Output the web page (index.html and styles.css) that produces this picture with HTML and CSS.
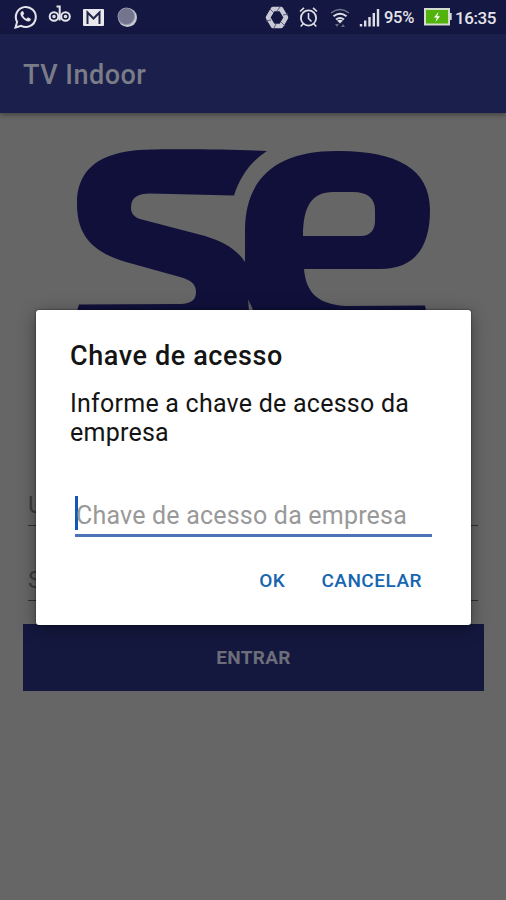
FILE: index.html
```html
<!DOCTYPE html>
<html lang="pt-BR">
<head>
    <meta charset="UTF-8">
    <meta name="viewport" content="width=device-width, initial-scale=1.0">
    <title>TV Indoor</title>
    <link rel="stylesheet" href="styles.css">
</head>
<body>
    <div class="status-bar">
        <svg class="status-left" width="126" height="34" viewBox="12 0 126 34" fill="none" stroke="#e4e4ea" stroke-width="2">
            <!-- whatsapp -->
            <path d="M15.5 27.5l1.6-5.6a10 10 0 1 1 4 3.9z"/>
            <path d="M21.5 11.5c-2 1.5-1 4.500 1.500 7s5.500 4 7.500 2l.5-1.500-3-1.700-1.500 1.400c-1.500-.5-3-2-3.500-3.500l1.200-1.400-1.200-2.700z" fill="#e4e4ea" stroke="none"/>
            <!-- gravador -->
            <circle cx="54" cy="16.500" r="4.300"/>
            <circle cx="65.500" cy="16.500" r="4.300"/>
            <path d="M59.700 5.500v15M56.500 6.500h3.500"/>
            <circle cx="54" cy="16.500" r=".8"/>
            <circle cx="65.500" cy="16.500" r=".8"/>
            <!-- gmail -->
            <rect x="83" y="9" width="21" height="17" rx="1" fill="#e9e9ed" stroke="none"/>
            <path d="M87.500 24V12.500l6 6 6-6V24" stroke="#24264b" stroke-width="2"/>
            <!-- bolha -->
            <circle cx="127.500" cy="17.500" r="9.500" fill="#c5c7d3" stroke="none"/>
            <circle cx="126.300" cy="16.300" r="8.300" fill="#73758f" stroke="#9395aa" stroke-width="1"/>
        </svg>
        <svg class="status-right" width="116" height="34" viewBox="264 0 116 34" fill="none" stroke="#dedee6" stroke-width="2">
            <!-- sincronizar -->
            <path d="M273 9h8l5 8.500-5 8.500h-8l-5-8.500z" stroke="#c7c8d3" stroke-width="4.500" stroke-linejoin="round"/>
            <path d="M270 9l4 4M280 7l-3 4M288 14l-5 1M285 26l-4-4M274 28l2-4M266 21l5-1" stroke="#5b5e7e" stroke-width="1"/>
            <!-- alarme -->
            <circle cx="308.500" cy="18" r="7.600" stroke-width="1.800"/>
            <path d="M308.500 13v5.500l3 3M300 11.500l4-3.700M317 11.500l-4-3.700M303.500 23.500l-2.800 3M313.500 23.500l2.800 3" stroke-width="1.600"/>
            <!-- wifi -->
            <path d="M331 13q9-7 18 0" stroke="#777990" stroke-width="1.500"/>
            <path d="M333.500 16.200q6.500-5 13 0M336 19.500q4-3 8 0"/>
            <path d="M337 20.500q3-1.500 6 0l-3 3z" fill="#dedee6" stroke="none"/>
            <path d="M335 24h4l-2 3zM341 27h4l-2-3z" fill="#666982" stroke="none"/>
            <!-- sinal -->
            <path d="M361 24v2.500M365.200 20.500v6M369.500 17v9.500M373.800 13v13.500M378 9v17.500" stroke-width="2.400"/>
        </svg>
        <span class="percent">95%</span>
        <svg class="battery" width="28" height="18" viewBox="0 0 28 18">
            <rect x="1" y="1" width="24" height="15.500" fill="#52b30c" stroke="#d3dccf" stroke-width="2"/>
            <path d="M26 5h1.700v7H26z" fill="#d3dccf"/>
            <path d="M14.500 4L10 9.500h2.800L11.500 14 16 8.300h-2.800z" fill="#fff"/>
        </svg>
        <span class="clock">16:35</span>
    </div>

    <div class="app-bar">TV Indoor</div>

    <div class="content">
        <svg class="logo" width="354" height="162" viewBox="77 149 354 162" fill="#10103b">
            <path d="M267 151C235 149.500 190 149 155 149.500C113 149.500 77 160 77 204C77 235 92 252 126 262L180 277C192 280 196 285 196 292C196 300 191 303.500 181 304L79 304.500L77 311H249L245 262C236 248 221 241 205 236L140 219C134 217 131 213 131 208C131 197 138 193.500 150 193.500L234 195.500C240 177 250 162 267 151Z"/>
            <path fill-rule="evenodd" d="M340 151C279 150 245 176 245 231V290L252 311H426L425 305.500L345 306C317 304 306 292 304 269H380C415 269 430 247 430 210C430 168 396 151.500 340 151ZM303 236H361C371 236 375 229 375 221V210C375 198 367 192 353 192H333C312 192 303 206 303 236Z"/>
            <path d="M249 301l4.500 10h-2.500z" fill="#63646b"/>
        </svg>

        <div class="field field-user">U</div>
        <div class="field field-password">S</div>
        <div class="enter">ENTRAR</div>
    </div>

    <div class="dialog">
        <h1>Chave de acesso</h1>
        <p>Informe a chave de acesso da empresa</p>
        <div class="key-input">Chave de acesso da empresa</div>
        <div class="actions">
            <span>OK</span>
            <span>CANCELAR</span>
        </div>
    </div>
</body>
</html>
```
FILE: styles.css
```css
* {
    box-sizing: border-box;
}

body {
    margin: 0;
    height: 900px;
    overflow: hidden;
    position: relative;
    background-color: #666;
    font-family: Roboto, sans-serif;
}

.status-bar {
    display: flex;
    align-items: center;
    height: 34px;
    padding-left: 12px;
    background-color: #141741;
    color: #e4e4ea;
    font-size: 17px;
    font-weight: 500;
}

.status-right {
    margin-left: 126px;
}

.percent {
    width: 35px;
    margin-left: 4px;
    font-size: 16.5px;
    letter-spacing: -0.3px;
    line-height: 34px;
    padding-top: 2px;
}

.battery {
    margin-left: 5px;
}

.clock {
    margin-left: 3px;
    padding-top: 2px;
    letter-spacing: -0.4px;
}

.app-bar {
    height: 79px;
    padding-left: 23px;
    background-color: #1a1f4b;
    color: #7a7c88;
    font-size: 27px;
    font-weight: 500;
    letter-spacing: 0.5px;
    line-height: 83px;
    box-shadow: 0 2px 5px rgba(0, 0, 0, 0.35);
}

.content {
    padding: 36px 22px 0 23px;
}

.logo {
    display: block;
    margin-left: 54px;
}

.field {
    height: 40px;
    margin: 0 6px 0 5px;
    border-bottom: 1px solid #303030;
    color: #3c3c3c;
    font-size: 24px;
    line-height: 39px;
}

.field-user {
    margin-top: 175px;
}

.field-password {
    margin-top: 35px;
}

.enter {
    height: 67px;
    margin-top: 23px;
    background-color: #14183f;
    color: #6c6e79;
    font-size: 19px;
    font-weight: 700;
    letter-spacing: 0.3px;
    line-height: 68px;
    text-align: center;
}

.dialog {
    position: absolute;
    top: 310px;
    left: 36px;
    width: 435px;
    height: 315px;
    padding: 30px 24px 0 34px;
    border-radius: 3px;
    background-color: #fff;
    color: #141414;
    box-shadow: 0 4px 18px rgba(0, 0, 0, 0.4), 0 0 2px rgba(0, 0, 0, 0.7);
}

.dialog h1 {
    margin: 0;
    font-size: 27px;
    font-weight: 500;
    letter-spacing: 0.6px;
    line-height: 32px;
}

.dialog p {
    margin: 17px 0 0;
    font-size: 25px;
    letter-spacing: 0.24px;
    line-height: 29px;
}

.key-input {
    height: 40px;
    margin: 50px 15px 0 5px;
    border-bottom: 3px solid #4a74b5;
    color: #999;
    font-size: 25px;
    letter-spacing: 0.2px;
    line-height: 37px;
    white-space: nowrap;
}

/* cursor */
.key-input::before {
    content: "";
    float: left;
    width: 3px;
    height: 34px;
    margin-top: -1px;
    margin-right: -2px;
    background-color: #1259b5;
}

.actions {
    display: flex;
    justify-content: flex-end;
    gap: 36px;
    margin-top: 31px;
    padding-right: 25px;
    color: #1565b0;
    font-size: 19px;
    font-weight: 500;
    letter-spacing: 0.5px;
    line-height: 26px;
}
```
